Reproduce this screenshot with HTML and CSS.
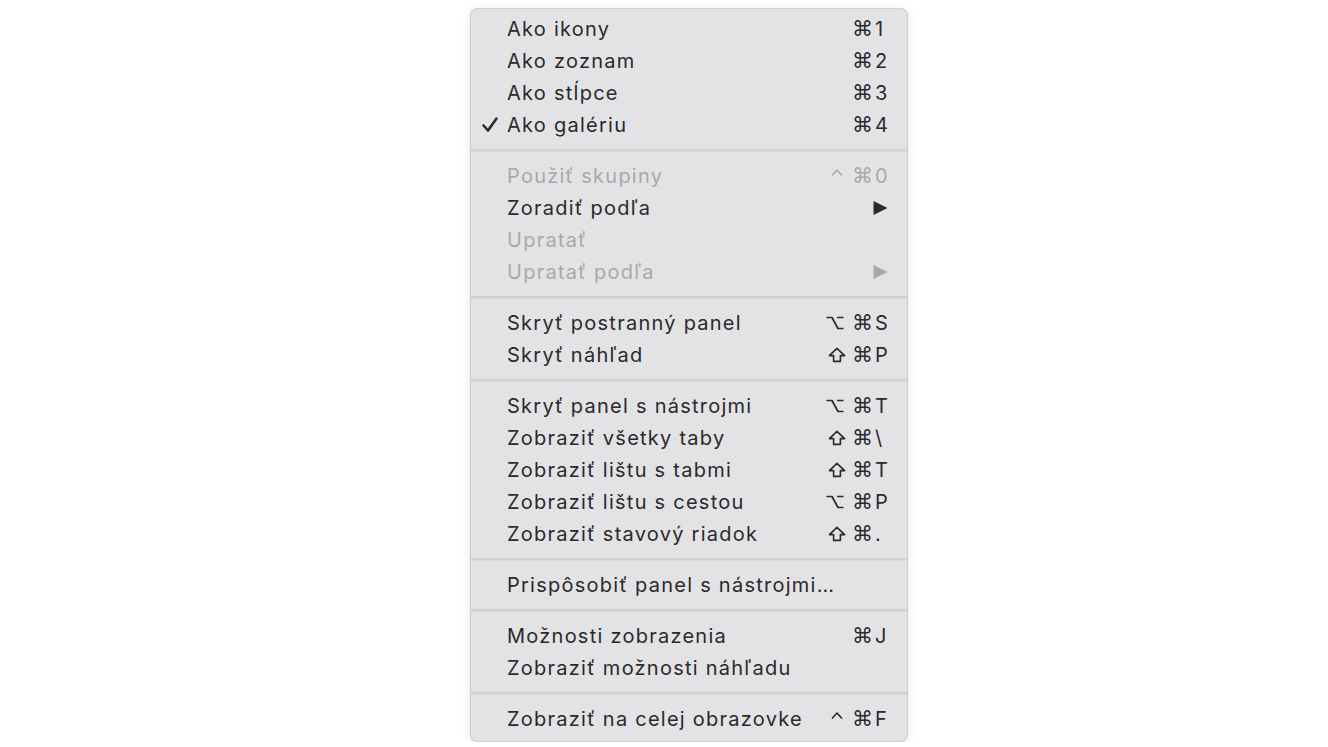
FILE: index.html
```html
<!DOCTYPE html>
<html lang="sk">
<head>
<meta charset="utf-8">
<title>Menu</title>
<link rel="stylesheet" href="styles.css">
</head>
<body>
<div class="menu">
  <div class="item"><span class="check"></span><span class="label">Ako ikony</span><span class="sc"><span class="cmd">⌘</span><span class="key">1</span></span></div>
  <div class="item"><span class="check"></span><span class="label">Ako zoznam</span><span class="sc"><span class="cmd">⌘</span><span class="key">2</span></span></div>
  <div class="item"><span class="check"></span><span class="label">Ako stĺpce</span><span class="sc"><span class="cmd">⌘</span><span class="key">3</span></span></div>
  <div class="item"><span class="check"><svg viewBox="0 0 18 18" width="18" height="18"><path d="M2.5 9.5 L7 14.5 L15.5 2.5" fill="none" stroke="#2b2b2d" stroke-width="2.6" stroke-linecap="round" stroke-linejoin="round"/></svg></span><span class="label">Ako galériu</span><span class="sc"><span class="cmd">⌘</span><span class="key">4</span></span></div>
  <div class="sep"></div>
  <div class="item disabled"><span class="check"></span><span class="label">Použiť skupiny</span><span class="sc"><svg class="mod ctrl" viewBox="0 0 12 16" width="12" height="16"><path d="M1 7.5 L6 2 L11 7.5"/></svg><span class="cmd">⌘</span><span class="key">0</span></span></div>
  <div class="item"><span class="check"></span><span class="label">Zoradiť podľa</span><span class="arrow"><svg viewBox="0 0 14 14" width="15" height="14"><path d="M0 0 L14 7 L0 14 Z"/></svg></span></div>
  <div class="item disabled"><span class="check"></span><span class="label">Upratať</span></div>
  <div class="item disabled"><span class="check"></span><span class="label">Upratať podľa</span><span class="arrow"><svg viewBox="0 0 14 14" width="15" height="14"><path d="M0 0 L14 7 L0 14 Z"/></svg></span></div>
  <div class="sep"></div>
  <div class="item"><span class="check"></span><span class="label">Skryť postranný panel</span><span class="sc"><svg class="mod opt" viewBox="0 0 18 16" width="18" height="16"><path d="M0.5 2.5 H6 L12 13.5 H17.5 M11 2.5 H17.5"/></svg><span class="cmd">⌘</span><span class="key">S</span></span></div>
  <div class="item"><span class="check"></span><span class="label">Skryť náhľad</span><span class="sc"><svg class="mod shift" viewBox="0 0 18 16" width="18" height="16"><path d="M9 1.3 L16.6 8.6 H12.4 V14.4 H5.6 V8.6 H1.4 Z"/></svg><span class="cmd">⌘</span><span class="key">P</span></span></div>
  <div class="sep"></div>
  <div class="item"><span class="check"></span><span class="label">Skryť panel s nástrojmi</span><span class="sc"><svg class="mod opt" viewBox="0 0 18 16" width="18" height="16"><path d="M0.5 2.5 H6 L12 13.5 H17.5 M11 2.5 H17.5"/></svg><span class="cmd">⌘</span><span class="key">T</span></span></div>
  <div class="item"><span class="check"></span><span class="label">Zobraziť všetky taby</span><span class="sc"><svg class="mod shift" viewBox="0 0 18 16" width="18" height="16"><path d="M9 1.3 L16.6 8.6 H12.4 V14.4 H5.6 V8.6 H1.4 Z"/></svg><span class="cmd">⌘</span><span class="key">\</span></span></div>
  <div class="item"><span class="check"></span><span class="label">Zobraziť lištu s tabmi</span><span class="sc"><svg class="mod shift" viewBox="0 0 18 16" width="18" height="16"><path d="M9 1.3 L16.6 8.6 H12.4 V14.4 H5.6 V8.6 H1.4 Z"/></svg><span class="cmd">⌘</span><span class="key">T</span></span></div>
  <div class="item"><span class="check"></span><span class="label">Zobraziť lištu s cestou</span><span class="sc"><svg class="mod opt" viewBox="0 0 18 16" width="18" height="16"><path d="M0.5 2.5 H6 L12 13.5 H17.5 M11 2.5 H17.5"/></svg><span class="cmd">⌘</span><span class="key">P</span></span></div>
  <div class="item"><span class="check"></span><span class="label">Zobraziť stavový riadok</span><span class="sc"><svg class="mod shift" viewBox="0 0 18 16" width="18" height="16"><path d="M9 1.3 L16.6 8.6 H12.4 V14.4 H5.6 V8.6 H1.4 Z"/></svg><span class="cmd">⌘</span><span class="key">.</span></span></div>
  <div class="sep"></div>
  <div class="item"><span class="check"></span><span class="label">Prispôsobiť panel s nástrojmi…</span></div>
  <div class="sep"></div>
  <div class="item"><span class="check"></span><span class="label">Možnosti zobrazenia</span><span class="sc"><span class="cmd">⌘</span><span class="key">J</span></span></div>
  <div class="item"><span class="check"></span><span class="label">Zobraziť možnosti náhľadu</span></div>
  <div class="sep"></div>
  <div class="item"><span class="check"></span><span class="label">Zobraziť na celej obrazovke</span><span class="sc"><svg class="mod ctrl" viewBox="0 0 12 16" width="12" height="16"><path d="M1 7.5 L6 2 L11 7.5"/></svg><span class="cmd">⌘</span><span class="key">F</span></span></div>
</div>
</body>
</html>
```
FILE: styles.css
```css
html, body {
  margin: 0;
  padding: 0;
  background: #ffffff;
}
body {
  display: flex;
  justify-content: flex-start;
  padding: 8px 0 0 470px;
  font-family: Inter, "Liberation Sans", sans-serif;
}
.menu {
  width: 438px;
  box-sizing: border-box;
  background: #e3e3e5;
  border: 1px solid #d0d0d2;
  border-radius: 8px;
  box-shadow: 0 2px 10px rgba(0,0,0,0.10), 0 0 1px rgba(0,0,0,0.15);
  padding: 4px 0 6px 0;
  color: #2a2a2c;
}
.item {
  display: flex;
  align-items: center;
  height: 32px;
  font-size: 20px;
  letter-spacing: 1.25px;
  padding: 0 16px 0 10px;
}
.item.disabled {
  color: #a9a9ab;
}
.check {
  width: 26px;
  display: flex;
  align-items: center;
}
.label {
  flex: 1;
  white-space: nowrap;
}
.sc {
  display: flex;
  align-items: center;
}
.mod {
  fill: none;
  stroke: currentColor;
  stroke-width: 1.7;
  stroke-linejoin: round;
  margin-right: 8px;
}
.mod.ctrl {
  stroke-width: 1.6;
  margin-right: 9px;
}
.mod.shift {
  stroke-width: 1.6;
  margin-right: 6px;
}
.cmd {
  font-family: "DejaVu Sans", sans-serif;
  font-size: 21px;
  letter-spacing: 0;
  margin-right: 2px;
}
.key {
  width: 16px;
  text-align: left;
  letter-spacing: 0;
}
.arrow {
  display: flex;
  align-items: center;
  padding-right: 3px;
  fill: #2a2a2c;
}
.disabled .arrow {
  fill: #a9a9ab;
}
.sep {
  height: 2px;
  margin: 8px 0 8px;
  background: #d1d1d4;
  border-bottom: 1px solid #dadadc;
}
```
